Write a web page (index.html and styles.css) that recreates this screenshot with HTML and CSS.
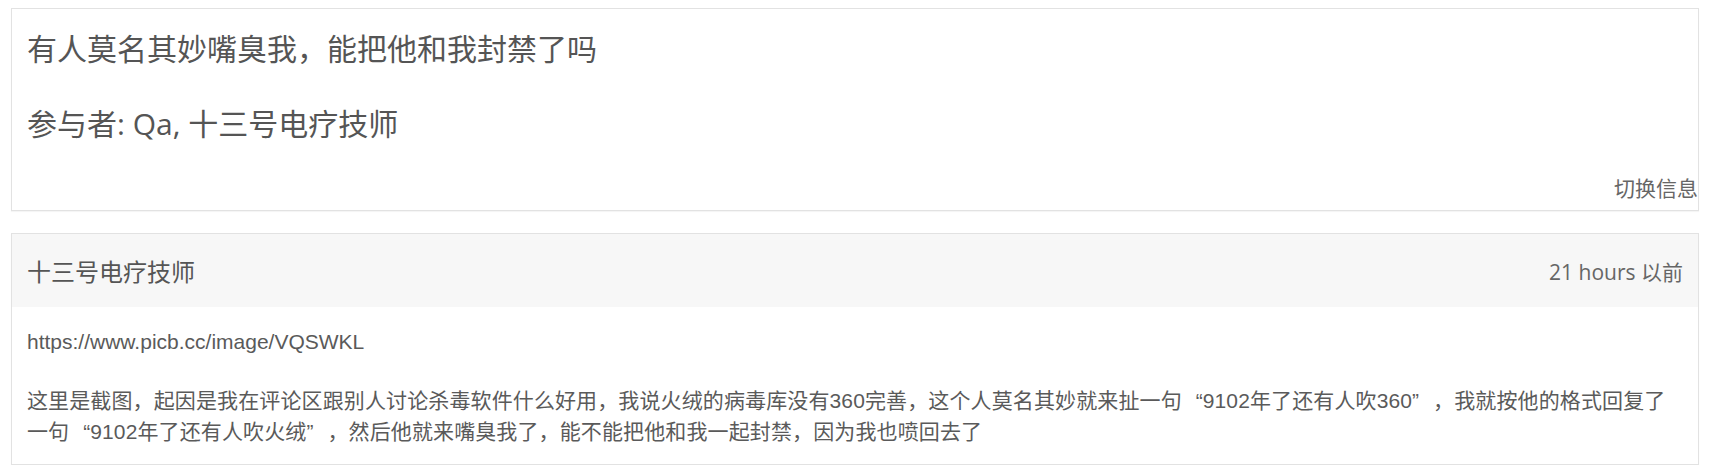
FILE: index.html
```html
<!DOCTYPE html>
<html lang="zh-CN">
<head>
<meta charset="utf-8">
<title>有人莫名其妙嘴臭我，能把他和我封禁了吗</title>
<link rel="stylesheet" href="styles.css">
</head>
<body>
<div class="page">
  <section class="card info">
    <h1 class="title">有人莫名其妙嘴臭我，能把他和我封禁了吗</h1>
    <p class="participants">参与者: Qa, 十三号电疗技师</p>
    <div class="toggle">切换信息</div>
  </section>
  <section class="card post">
    <header class="post-head">
      <span class="author">十三号电疗技师</span>
      <span class="time">21 hours 以前</span>
    </header>
    <div class="post-body">
      <p class="link">https://www.picb.cc/image/VQSWKL</p>
      <p class="text">这里是截图，起因是我在评论区跟别人讨论杀毒软件什么好用，我说火绒的病毒库没有360完善，这个人莫名其妙就来扯一句<span class="q-open">“</span>9102年了还有人吹360<span class="q-close">”</span>，我就按他的格式回复了一句<span class="q-open">“</span>9102年了还有人吹火绒<span class="q-close">”</span>，然后他就来嘴臭我了，能不能把他和我一起封禁，因为我也喷回去了</p>
    </div>
  </section>
</div>
</body>
</html>
```
FILE: styles.css
```css
html, body {
  margin: 0;
  padding: 0;
  background: #ffffff;
}

.page {
  padding: 8px 21px 0 11px;
  font-family: "Open Sans", "Noto Sans CJK SC", sans-serif;
  color: #555555;
}

.card {
  border: 1px solid #e2e2e2;
  box-shadow: 0 1px 1px rgba(0, 0, 0, 0.04);
  background: #ffffff;
}

.info {
  padding: 17px 0 7px 15px;
}

.title {
  margin: 0 0 30px;
  font-size: 30px;
  line-height: 45px;
  font-weight: normal;
  color: #555555;
}

.participants {
  margin: 0 0 27px;
  font-size: 30px;
  line-height: 45px;
  color: #555555;
}

.toggle {
  text-align: right;
  font-size: 21px;
  line-height: 30px;
  color: #666666;
}

.post {
  margin-top: 22px;
}

.post-head {
  height: 73px;
  padding: 0 15px;
  background: #f7f7f7;
  display: flex;
  align-items: center;
  justify-content: space-between;
}

.author {
  font-size: 24px;
  color: #555555;
}

.time {
  font-size: 21px;
  color: #666666;
}

.post-body {
  padding: 19px 30px 17px 15px;
  font-family: "Liberation Sans", "Noto Sans CJK SC", sans-serif;
  font-size: 21px;
  line-height: 31px;
  color: #5a5a5a;
}

.link {
  margin: 0 0 28px;
}

.text {
  margin: 0;
  letter-spacing: 0.12px;
}

.q-open,
.q-close {
  display: inline-block;
  width: 1em;
}

.q-open {
  text-align: right;
}

.q-close {
  text-align: left;
}
```
